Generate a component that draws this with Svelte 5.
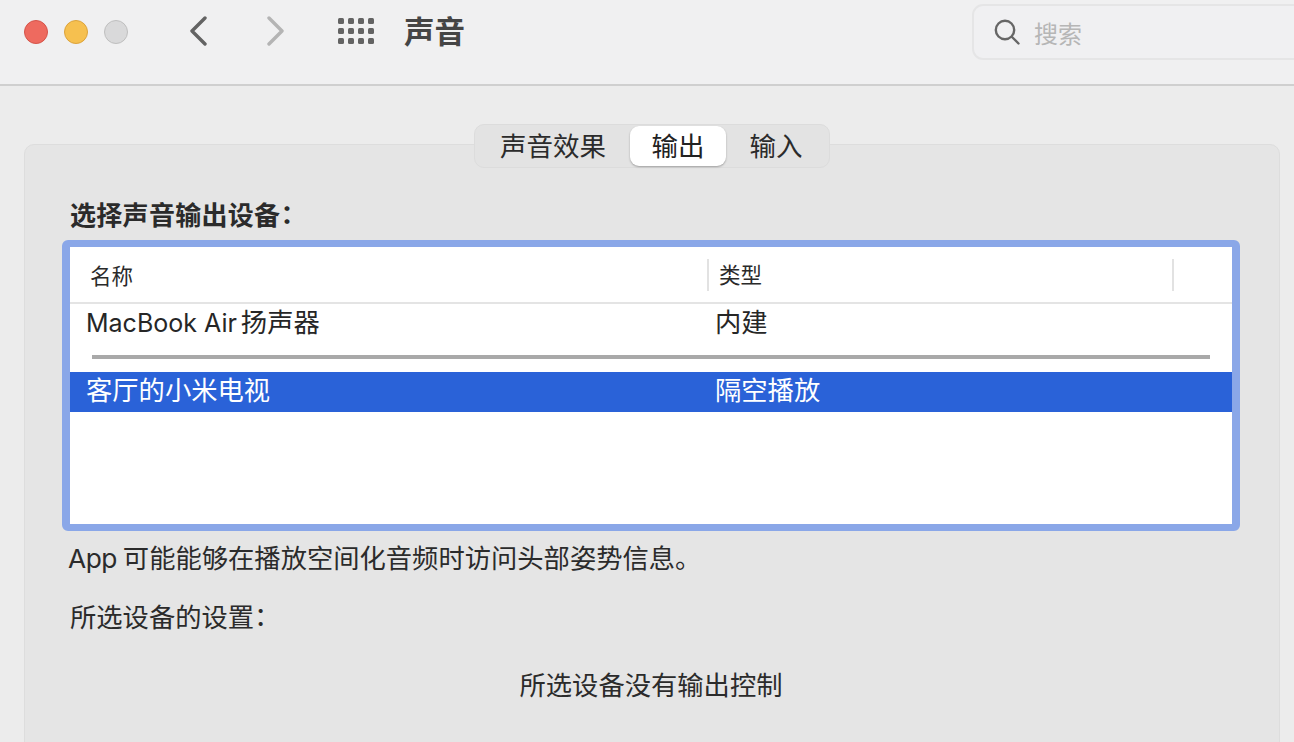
<script lang="ts">
  const tabs = [
    { label: '声音效果', width: 154 },
    { label: '输出', width: 96, active: true },
    { label: '输入', width: 100 }
  ];
  const dots = Array.from({ length: 12 });
</script>

<div class="window">
  <header class="toolbar">
    <div class="lights">
      <span class="light red"></span>
      <span class="light yellow"></span>
      <span class="light grey"></span>
    </div>
    <button class="nav back" aria-label="后退">
      <svg width="18" height="30" viewBox="0 0 18 30"><path d="M16 2 L3 15 L16 28" /></svg>
    </button>
    <button class="nav forward" aria-label="前进">
      <svg width="18" height="30" viewBox="0 0 18 30"><path d="M2 2 L15 15 L2 28" /></svg>
    </button>
    <div class="grid-icon">
      {#each dots as _}
        <span></span>
      {/each}
    </div>
    <h1>声音</h1>
    <div class="search">
      <svg width="26" height="26" viewBox="0 0 26 26">
        <circle cx="11" cy="11" r="9.2" />
        <path d="M18 18 L24.5 24.5" />
      </svg>
      <span>搜索</span>
    </div>
  </header>

  <main class="content">
    <div class="tabs">
      {#each tabs as tab}
        <div class="tab" class:active={tab.active} style="width: {tab.width}px">{tab.label}</div>
      {/each}
    </div>

    <section class="panel">
      <h2>选择声音输出设备<span class="colon">：</span></h2>

      <div class="list">
        <div class="list-head">
          <div class="col-name">名称</div>
          <div class="col-type">类型</div>
          <div class="col-rest"></div>
        </div>
        <div class="row first">
          <span class="cell-name"><span class="latin">MacBook Air</span>扬声器</span>
          <span class="cell-type">内建</span>
        </div>
        <div class="divider"></div>
        <div class="row selected">
          <span class="cell-name">客厅的小米电视</span>
          <span class="cell-type">隔空播放</span>
        </div>
      </div>

      <p class="note"><span class="latin-app">App</span>可能能够在播放空间化音频时访问头部姿势信息。</p>
      <p class="settings">所选设备的设置<span class="colon">：</span></p>
      <p class="empty">所选设备没有输出控制</p>
    </section>
  </main>
</div>

<style>
  :global(body) {
    margin: 0;
    background: #ececec;
  }

  .window {
    width: 1294px;
    height: 742px;
    overflow: hidden;
    background: #ececec;
    color: #2a2a2a;
    font-family: Inter, "Noto Sans CJK SC", sans-serif;
  }

  .toolbar {
    box-sizing: border-box;
    height: 86px;
    display: flex;
    align-items: flex-start;
    padding-left: 24px;
    background: #f0f0f1;
    border-bottom: 2px solid #cfcfcf;
    overflow: hidden;
  }

  .lights {
    display: flex;
    gap: 16px;
    margin-top: 20px;
  }

  .light {
    box-sizing: border-box;
    width: 24px;
    height: 24px;
    border-radius: 50%;
    border: 1px solid;
  }

  .red { background: #ee6a5f; border-color: #d5544a; }
  .yellow { background: #f6c04f; border-color: #dca33c; }
  .grey { background: #d9d9da; border-color: #bfbfbf; }

  .nav {
    padding: 0;
    border: 0;
    background: none;
    display: block;
    height: 30px;
    margin-top: 16px;
  }

  .nav svg {
    display: block;
    fill: none;
    stroke-width: 3.4;
    stroke-linecap: round;
    stroke-linejoin: round;
  }

  .back { margin-left: 61px; }
  .back svg { stroke: #636363; }
  .forward { margin-left: 60px; }
  .forward svg { stroke: #b4b4b4; }

  .grid-icon {
    display: grid;
    grid-template-columns: repeat(4, 6px);
    grid-template-rows: repeat(3, 6px);
    gap: 4px;
    margin: 18px 0 0 53px;
  }

  .grid-icon span {
    background: #636363;
    border-radius: 1.5px;
  }

  h1 {
    margin: 11px 0 0 30px;
    font-size: 30.5px;
    line-height: 42px;
    font-weight: 700;
    color: #454545;
  }

  .search {
    box-sizing: border-box;
    width: 340px;
    height: 56px;
    flex: none;
    margin: 4px -18px 0 auto;
    display: flex;
    align-items: center;
    gap: 14px;
    padding-left: 20px;
    border: 2px solid #e5e5e6;
    border-radius: 11px;
    background: #f0f0f2;
    font-size: 24px;
    color: #b6b6b6;
  }

  .search svg {
    fill: none;
    stroke: #666;
    stroke-width: 2.4;
    stroke-linecap: round;
  }

  .content {
    padding: 38px 14px 0 24px;
  }

  .tabs {
    position: relative;
    z-index: 1;
    box-sizing: border-box;
    width: 356px;
    height: 44px;
    margin: 0 auto -24px;
    padding: 1px;
    display: flex;
    background: #e3e3e3;
    border: 1px solid #dcdcdc;
    border-radius: 10px;
    font-size: 26.5px;
    line-height: 40px;
    color: #2b2b2b;
  }

  .tab {
    height: 40px;
    text-align: center;
    flex: none;
  }

  .tab.active {
    background: #fff;
    border-radius: 9px;
    box-shadow: 0 1px 2px rgba(0, 0, 0, 0.3);
    color: #222;
  }

  .panel {
    box-sizing: border-box;
    height: 640px;
    padding: 52px 40px 0 38px;
    background: #e5e5e5;
    border: 1px solid #dddddd;
    border-radius: 10px;
  }

  h2 {
    margin: 0 0 5px 7px;
    font-size: 26px;
    line-height: 38px;
    font-weight: 700;
    letter-spacing: 0.3px;
    color: #2b2b2b;
  }

  /* TC font centres the full-width colon; halt trims it to half width */
  .colon {
    font-family: "Noto Sans CJK TC", sans-serif;
    font-feature-settings: "halt";
    line-height: 1;
  }

  .list {
    box-sizing: border-box;
    height: 291px;
    width: 1178px;
    margin-left: -1px;
    background: #fff;
    border: solid #8aa7e8;
    border-width: 7px 8px;
    border-radius: 6px;
  }

  .list-head {
    box-sizing: border-box;
    height: 57px;
    display: flex;
    align-items: center;
    border-bottom: 2px solid #e4e4e4;
    font-size: 21.5px;
    color: #2a2a2a;
  }

  .col-name {
    width: 637px;
    box-sizing: border-box;
    padding-left: 20px;
  }

  .col-type {
    width: 467px;
    height: 32px;
    line-height: 32px;
    box-sizing: border-box;
    padding-left: 10px;
    border-left: 2px solid #e2e2e2;
    border-right: 2px solid #e2e2e2;
  }

  .row {
    box-sizing: border-box;
    display: flex;
    align-items: center;
    height: 40px;
    padding-bottom: 7px;
    font-size: 26.3px;
  }

  .row.first {
    height: 39px;
    padding-bottom: 6px;
    color: #262626;
  }

  .cell-name {
    width: 629px;
    flex: none;
    padding-left: 16px;
    white-space: nowrap;
  }

  .latin {
    margin-right: 4px;
    font-size: 25px;
  }

  .divider {
    height: 4px;
    margin: 12px 22px 13px 22px;
    background: #a9a9a9;
  }

  .row.selected {
    background: #2a62d8;
    color: #fff;
  }

  p {
    margin: 0;
    font-size: 26.3px;
    line-height: 36px;
    color: #2b2b2b;
  }

  .latin-app {
    margin-right: 6px;
    letter-spacing: -0.5px;
  }

  .note {
    margin: 10px 0 0 5px;
  }

  .settings {
    margin: 23px 0 0 7px;
  }

  .empty {
    margin: 32px 0 0;
    text-align: center;
  }
</style>
